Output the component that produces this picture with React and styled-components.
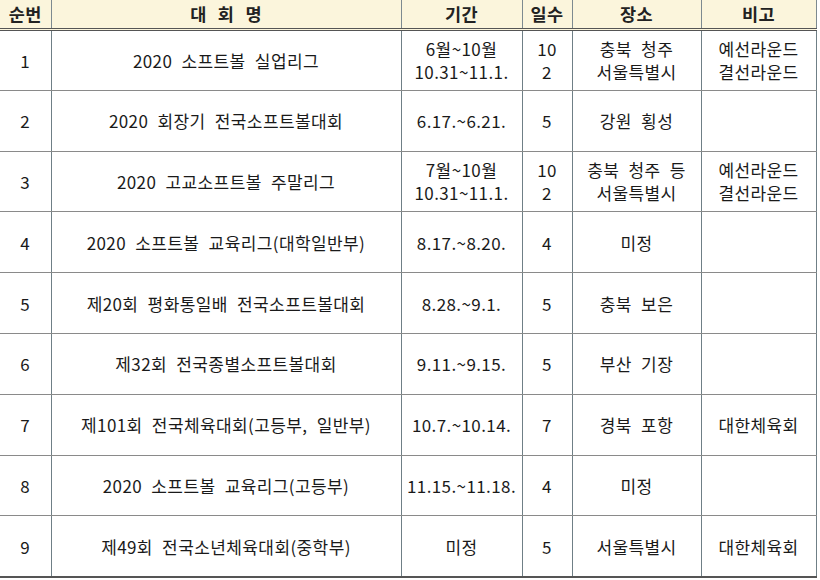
import React from "react";
import styled, { createGlobalStyle } from "styled-components";

const Global = createGlobalStyle`
  html, body { margin: 0; padding: 0; background: #fff; }
  body { font-family: "Noto Sans CJK KR", "Noto Sans", sans-serif; color: #1a1a1a; }
`;

const Table = styled.table`
  width: 816px;
  border-collapse: collapse;
  table-layout: fixed;
  font-size: 17px;
  letter-spacing: 0.4px;
  word-spacing: 5px;
`;

const HeadCell = styled.th`
  height: 28px;
  padding: 0;
  background: #fbf5dc;
  font-weight: 700;
  font-size: 17.5px;
  letter-spacing: 0.3px;
  word-spacing: 7px;
  color: #222;
  text-align: center;
  vertical-align: middle;
  border-left: ${(p) => (p.$first ? "none" : "1px solid #7d8a90")};
  border-right: ${(p) => (p.$last ? "1px solid #7d8a90" : "none")};
  border-bottom: 3px double #555;
  line-height: 1;
`;

const Cell = styled.td`
  height: 60.8px;
  box-sizing: border-box;
  padding: 0;
  text-align: center;
  vertical-align: middle;
  line-height: 23px;
  border-left: ${(p) => (p.$first ? "none" : "1px solid #6f7f86")};
  border-right: ${(p) => (p.$last ? "1px solid #6f7f86" : "none")};
  border-bottom: 1px solid #8a8a8a;
`;

const LastRow = styled.tr`
  & > td { border-bottom: 2px solid #555; }
`;

const cols = [51, 350, 121, 50, 129, 115];

const rows = [
  ["1", "2020 소프트볼 실업리그", ["6월~10월", "10.31~11.1."], ["10", "2"], ["충북 청주", "서울특별시"], ["예선라운드", "결선라운드"]],
  ["2", "2020 회장기 전국소프트볼대회", "6.17.~6.21.", "5", "강원 횡성", ""],
  ["3", "2020 고교소프트볼 주말리그", ["7월~10월", "10.31~11.1."], ["10", "2"], ["충북 청주 등", "서울특별시"], ["예선라운드", "결선라운드"]],
  ["4", "2020 소프트볼 교육리그(대학일반부)", "8.17.~8.20.", "4", "미정", ""],
  ["5", "제20회 평화통일배 전국소프트볼대회", "8.28.~9.1.", "5", "충북 보은", ""],
  ["6", "제32회 전국종별소프트볼대회", "9.11.~9.15.", "5", "부산 기장", ""],
  ["7", "제101회 전국체육대회(고등부, 일반부)", "10.7.~10.14.", "7", "경북 포항", "대한체육회"],
  ["8", "2020 소프트볼 교육리그(고등부)", "11.15.~11.18.", "4", "미정", ""],
  ["9", "제49회 전국소년체육대회(중학부)", "미정", "5", "서울특별시", "대한체육회"],
];

const headers = ["순번", "대 회 명", "기간", "일수", "장소", "비고"];

function Content({ v }) {
  if (Array.isArray(v)) {
    return (
      <>
        {v[0]}
        <br />
        {v[1]}
      </>
    );
  }
  return v;
}

export default function App() {
  return (
    <>
      <Global />
      <Table>
        <colgroup>
          {cols.map((w, i) => (
            <col key={i} style={{ width: w }} />
          ))}
        </colgroup>
        <thead>
          <tr>
            {headers.map((h, i) => (
              <HeadCell key={i} $first={i === 0} $last={i === headers.length - 1}>
                {h}
              </HeadCell>
            ))}
          </tr>
        </thead>
        <tbody>
          {rows.map((r, ri) => {
            const Row = ri === rows.length - 1 ? LastRow : "tr";
            return (
              <Row key={ri}>
                {r.map((c, ci) => (
                  <Cell key={ci} $first={ci === 0} $last={ci === r.length - 1}>
                    <Content v={c} />
                  </Cell>
                ))}
              </Row>
            );
          })}
        </tbody>
      </Table>
    </>
  );
}
